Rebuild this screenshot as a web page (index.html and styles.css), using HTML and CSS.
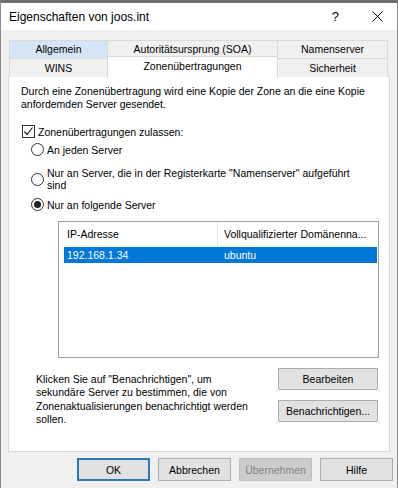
FILE: index.html
```html
<!DOCTYPE html>
<html>

<head>
  <meta charset="UTF-8">
  <title>Eigenschaften von joos.int</title>
  <link rel="stylesheet" href="styles.css">
</head>

<body>
  <div class="fenster">
    <div class="titelleiste">
      <span class="titel">Eigenschaften von joos.int</span>
      <span class="frage">?</span>
      <svg class="schliessen" width="11" height="11" viewBox="0 0 11 11">
        <path d="M0.5 0.5 L10.5 10.5 M10.5 0.5 L0.5 10.5" stroke="#000" stroke-width="1" fill="none" />
      </svg>
    </div>

    <div class="inhalt">
      <!-- Registerkarten, zwei Reihen -->
      <div class="reiter-zeile">
        <div class="reiter hover">Allgemein</div>
        <div class="reiter">Autoritätsursprung (SOA)</div>
        <div class="reiter letzter">Namenserver</div>
      </div>
      <div class="reiter-zeile unten">
        <div class="reiter">WINS</div>
        <div class="reiter aktiv">Zonenübertragungen</div>
        <div class="reiter letzter">Sicherheit</div>
      </div>

      <div class="panel">
        <p class="beschreibung">Durch eine Zonenübertragung wird eine Kopie der Zone an die eine Kopie<br>anfordemden Server gesendet.</p>

        <div class="check-zeile">
          <span class="checkbox">
            <svg width="11" height="11" viewBox="0 0 11 11">
              <path d="M1.5 5.5 L4 8.5 L9.5 1.5" stroke="#222" stroke-width="1.2" fill="none" />
            </svg>
          </span>
          <span>Zonenübertragungen zulassen:</span>
        </div>

        <div class="radio-zeile erste">
          <span class="radio"></span>
          <span>An jeden Server</span>
        </div>
        <div class="radio-zeile zweizeilig">
          <span class="radio"></span>
          <span>Nur an Server, die in der Registerkarte "Namenserver" aufgeführt<br>sind</span>
        </div>
        <div class="radio-zeile">
          <span class="radio gewaehlt"></span>
          <span>Nur an folgende Server</span>
        </div>

        <div class="liste">
          <div class="liste-kopf">
            <div class="spalte eins">IP-Adresse</div>
            <div class="spalte zwei">Vollqualifizierter Domänenna...</div>
          </div>
          <div class="liste-zeile markiert">
            <div class="spalte eins">192.168.1.34</div>
            <div class="spalte zwei">ubuntu</div>
          </div>
        </div>

        <div class="benachrichtigung">
          <p class="hinweis">Klicken Sie auf "Benachrichtigen", um<br>sekundäre Server zu bestimmen, die von<br>Zonenaktualisierungen benachrichtigt werden<br>sollen.</p>
          <div class="seiten-knoepfe">
            <button class="knopf breit">Bearbeiten</button>
            <button class="knopf breit">Benachrichtigen...</button>
          </div>
        </div>
      </div>

      <div class="knopfleiste">
        <button class="knopf standard">OK</button>
        <button class="knopf">Abbrechen</button>
        <button class="knopf inaktiv">Übernehmen</button>
        <button class="knopf">Hilfe</button>
      </div>
    </div>
  </div>
</body>

</html>
```

FILE: styles.css
```css
body {
  margin: 0;
  padding: 0;
  font-family: "Liberation Sans", Arial, sans-serif;
  font-size: 10.5px;
  color: #000;
  background-color: #f0f0f0;
}

p {
  margin: 0;
}

.fenster {
  width: 398px;
  height: 488px;
  box-sizing: border-box;
  border-top: 3px solid #6e6e6e;
  border-left: 1px solid #8c8c8c;
  border-right: 1px solid #8c8c8c;
  background-color: #f0f0f0;
  display: flex;
  flex-direction: column;
}

.titelleiste {
  height: 27px;
  flex-shrink: 0;
  background-color: #ffffff;
  display: flex;
  align-items: center;
  padding-left: 8px;
  font-size: 12px;
}

.titel {
  flex: 1;
}

.frage {
  margin-right: 33px;
  font-size: 13px;
}

.schliessen {
  margin-right: 14px;
}

.inhalt {
  padding: 10px 0 0 7px;
}

/* Registerkarten */
.reiter-zeile {
  display: grid;
  grid-template-columns: 98px 170px 111px;
  height: 18px;
  margin-left: 1px;
}

.reiter {
  border-top: 1px solid #d9d9d9;
  border-left: 1px solid #d9d9d9;
  background-color: #f0f0f0;
  text-align: center;
  line-height: 17px;
  white-space: nowrap;
}

.reiter.letzter {
  border-right: 1px solid #d9d9d9;
}

.reiter.hover {
  background-color: #d3e5f6;
}

.reiter-zeile.unten .reiter {
  line-height: 18px;
}

.reiter.aktiv {
  background-color: #ffffff;
  margin-top: -2px;
  margin-bottom: -1px;
  margin-right: -1px;
  border-right: 1px solid #d9d9d9;
  position: relative;
  z-index: 1;
  line-height: 17px;
}

/* Inhalt der Registerkarte */
.panel {
  width: 382px;
  height: 376px;
  box-sizing: border-box;
  border: 1px solid #d9d9d9;
  background-color: #ffffff;
  padding: 8px 12px 0 12px;
}

.beschreibung {
  line-height: 13px;
  white-space: nowrap;
}

.check-zeile,
.radio-zeile {
  display: flex;
  align-items: center;
  gap: 3px;
}

.check-zeile {
  margin-top: 14px;
  margin-left: 1px;
  height: 13px;
}

.checkbox {
  width: 13px;
  height: 13px;
  box-sizing: border-box;
  border: 1px solid #333;
  display: flex;
  align-items: center;
  justify-content: center;
}

.radio-zeile {
  margin-left: 10px;
  margin-top: 6px;
  height: 13px;
}

.radio-zeile.erste {
  margin-top: 5px;
}

.radio-zeile.zweizeilig {
  margin-top: 10px;
  height: 26px;
  line-height: 12px;
}

.radio {
  width: 13px;
  height: 13px;
  box-sizing: border-box;
  border: 1px solid #333;
  border-radius: 50%;
  background-color: #fff;
  flex-shrink: 0;
  display: flex;
  align-items: center;
  justify-content: center;
}

.radio.gewaehlt::after {
  content: "";
  width: 7px;
  height: 7px;
  border-radius: 50%;
  background-color: #222;
}

/* Serverliste */
.liste {
  margin-top: 10px;
  margin-left: 37px;
  width: 321px;
  height: 137px;
  box-sizing: border-box;
  border: 1px solid #a0a0a0;
  padding: 0 1px 0 5px;
}

.liste-kopf,
.liste-zeile {
  display: flex;
}

.liste-kopf {
  height: 24px;
  align-items: center;
  margin-left: -5px;
  padding-left: 5px;
}

.liste-zeile {
  height: 16px;
  align-items: center;
  margin-top: 1px;
}

.liste-zeile.markiert {
  background-color: #0078d7;
  color: #fff;
}

.spalte.eins {
  width: 154px;
  padding-left: 3px;
  box-sizing: border-box;
}

.liste-kopf .spalte.eins {
  border-right: 1px solid #e5e5e5;
  height: 24px;
  line-height: 24px;
}

.spalte.zwei {
  padding-left: 6px;
  white-space: nowrap;
}

/* Benachrichtigen */
.benachrichtigung {
  display: flex;
  margin-top: 10px;
  margin-right: -1px;
}

.hinweis {
  flex: 1;
  margin-left: 15px;
  margin-top: 5px;
  line-height: 13.4px;
  white-space: nowrap;
}

.seiten-knoepfe {
  display: flex;
  flex-direction: column;
  gap: 10px;
}

.knopf {
  font-family: inherit;
  font-size: 10.5px;
  color: #000;
  background-color: #e1e1e1;
  border: 1px solid #adadad;
  width: 73px;
  height: 23px;
  padding: 0;
}

.knopf.breit {
  width: 100px;
  height: 22px;
}

.knopf.standard {
  border: 2px solid #2a7ab8;
}

.knopf.inaktiv {
  background-color: #cccccc;
  border-color: #bfbfbf;
  color: #838383;
}

.knopfleiste {
  display: flex;
  justify-content: flex-end;
  gap: 8px;
  margin-top: 6px;
  padding-right: 4px;
}
```
